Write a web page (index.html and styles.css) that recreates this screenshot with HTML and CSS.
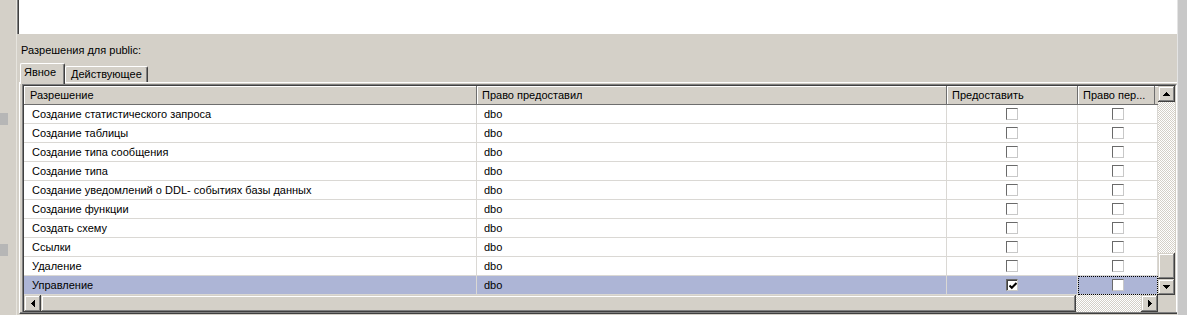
FILE: index.html
```html
<!DOCTYPE html>
<html lang="ru">
<head>
<meta charset="utf-8">
<title>Разрешения</title>
<link rel="stylesheet" href="styles.css">
</head>
<body>
<div class="window">
  <div class="side-left">
    <div class="mark mark-1"></div>
    <div class="mark mark-2"></div>
  </div>
  <div class="main">
    <div class="top-box"></div>
    <div class="panel">
      <div class="caption">Разрешения для public:</div>
      <div class="tabs">
        <div class="tab tab-active">Явное</div>
        <div class="tab tab-inactive">Действующее</div>
      </div>
      <div class="tab-body">
        <div class="grid">
          <div class="grid-inner">
            <div class="grid-main">
              <div class="view">
                <div class="header">
                  <div class="hcell hc1">Разрешение</div>
                  <div class="hcell">Право предоставил</div>
                  <div class="hcell">Предоставить</div>
                  <div class="hcell">Право пер...</div>
                  <div class="hfill"></div>
                </div>
                <div class="row"><div class="cell c1">Создание статистического запроса</div><div class="cell c2">dbo</div><div class="cell cc"><span class="cb"></span></div><div class="cell cc"><span class="cb"></span></div></div>
                <div class="row"><div class="cell c1">Создание таблицы</div><div class="cell c2">dbo</div><div class="cell cc"><span class="cb"></span></div><div class="cell cc"><span class="cb"></span></div></div>
                <div class="row"><div class="cell c1">Создание типа сообщения</div><div class="cell c2">dbo</div><div class="cell cc"><span class="cb"></span></div><div class="cell cc"><span class="cb"></span></div></div>
                <div class="row"><div class="cell c1">Создание типа</div><div class="cell c2">dbo</div><div class="cell cc"><span class="cb"></span></div><div class="cell cc"><span class="cb"></span></div></div>
                <div class="row"><div class="cell c1">Создание уведомлений о DDL- событиях базы данных</div><div class="cell c2">dbo</div><div class="cell cc"><span class="cb"></span></div><div class="cell cc"><span class="cb"></span></div></div>
                <div class="row"><div class="cell c1">Создание функции</div><div class="cell c2">dbo</div><div class="cell cc"><span class="cb"></span></div><div class="cell cc"><span class="cb"></span></div></div>
                <div class="row"><div class="cell c1">Создать схему</div><div class="cell c2">dbo</div><div class="cell cc"><span class="cb"></span></div><div class="cell cc"><span class="cb"></span></div></div>
                <div class="row"><div class="cell c1">Ссылки</div><div class="cell c2">dbo</div><div class="cell cc"><span class="cb"></span></div><div class="cell cc"><span class="cb"></span></div></div>
                <div class="row"><div class="cell c1">Удаление</div><div class="cell c2">dbo</div><div class="cell cc"><span class="cb"></span></div><div class="cell cc"><span class="cb"></span></div></div>
                <div class="row row-selected"><div class="cell c1">Управление</div><div class="cell c2">dbo</div><div class="cell cc"><span class="cb cb-checked"><svg width="8" height="8" viewBox="0 0 8 8"><path d="M0.5 3.5 L2.8 5.8 L7.5 1" fill="none" stroke="#000" stroke-width="2"/></svg></span></div><div class="cell cc focus"><span class="cb"></span></div></div>
              </div>
              <div class="vscroll">
                <div class="sbtn sbtn-v"><svg width="7" height="4" shape-rendering="crispEdges"><path d="M3 0h1v1h-1zM2 1h3v1h-3zM1 2h5v1h-5zM0 3h7v1h-7z"/></svg></div>
                <div class="track"></div>
                <div class="thumb thumb-v"></div>
                <div class="sbtn sbtn-v"><svg width="7" height="4" shape-rendering="crispEdges"><path d="M0 0h7v1h-7zM1 1h5v1h-5zM2 2h3v1h-3zM3 3h1v1h-1z"/></svg></div>
              </div>
            </div>
            <div class="hscroll">
              <div class="sbtn sbtn-h"><svg width="4" height="7" shape-rendering="crispEdges"><path d="M3 0h1v7h-1zM2 1h1v5h-1zM1 2h1v3h-1zM0 3h1v1h-1z"/></svg></div>
              <div class="thumb thumb-h"></div>
              <div class="track"></div>
              <div class="sbtn sbtn-h"><svg width="4" height="7" shape-rendering="crispEdges"><path d="M0 0h1v7h-1zM1 1h1v5h-1zM2 2h1v3h-1zM3 3h1v1h-1z"/></svg></div>
              <div class="corner"></div>
            </div>
          </div>
        </div>
      </div>
    </div>
  </div>
  <div class="side-right"></div>
</div>
</body>
</html>
```
FILE: styles.css
```css
* { box-sizing: border-box; }
html, body { margin: 0; padding: 0; }
body {
  width: 1187px;
  height: 315px;
  overflow: hidden;
  background: #d4d0c8;
  font-family: "Liberation Sans", Arial, sans-serif;
  font-size: 11px;
  color: #000;
}
.window { display: flex; height: 315px; }

.side-left {
  width: 17px;
  border-right: 1px solid #e6e4de;
  display: flex;
  flex-direction: column;
}
.mark { width: 8px; background: #b6b6b6; }
.mark-1 { height: 12px; margin-top: 113px; }
.mark-2 { height: 12px; margin-top: 119px; }

.main { width: 1160px; display: flex; flex-direction: column; }
.top-box {
  height: 34px;
  background: #fff;
  border-left: 1px solid #808080;
  box-shadow: inset 1px 0 #404040;
}
.panel {
  flex: 1;
  padding: 10px 0 1px 2px;
  display: flex;
  flex-direction: column;
}
.caption { height: 13px; line-height: 13px; margin: 0 0 6px 2px; }

.tabs {
  display: flex;
  align-items: flex-end;
  height: 19px;
  margin-left: 1px;
  position: relative;
  z-index: 1;
}
.tab {
  height: 16px;
  line-height: 14px;
  background: #d4d0c8;
  border-top: 1px solid #fff;
  border-left: 1px solid #fff;
  border-right: 1px solid #404040;
  box-shadow: inset -1px 0 #808080;
  border-radius: 2px 2px 0 0;
  white-space: nowrap;
}
.tab-active { width: 45px; height: 21px; margin-bottom: -2px; line-height: 17px; padding-left: 3px; }
.tab-inactive { width: 83px; padding-left: 5px; }

.tab-body {
  height: 232px;
  border-top: 1px solid #fff;
  border-left: 1px solid #fff;
  border-bottom: 1px solid #404040;
  box-shadow: inset 0 -1px #808080;
  padding: 1px 0 1px 2px;
}

.grid {
  width: 1155px;
  height: 228px;
  border-top: 1px solid #808080;
  border-left: 1px solid #808080;
  border-right: 1px solid #fff;
}
.grid-inner {
  height: 227px;
  border-top: 1px solid #404040;
  border-left: 1px solid #404040;
  border-right: 1px solid #d4d0c8;
  background: #fff;
  display: flex;
  flex-direction: column;
}
.grid-main { display: flex; height: 209px; }
.view { width: 1134px; }

.header {
  display: grid;
  grid-template-columns: 453px 470px 131px 77px 3px;
  height: 19px;
}
.hcell {
  background: #d4d0c8;
  border-right: 1px solid #6e6e6e;
  border-bottom: 1px solid #6e6e6e;
  box-shadow: inset 1px 1px #fff;
  line-height: 18px;
  padding-left: 5px;
  white-space: nowrap;
  overflow: hidden;
}
.hc1 { padding-left: 6px; }
.hfill { background: #d4d0c8; border-bottom: 1px solid #6e6e6e; box-shadow: inset 0 1px #fff; }

.row {
  display: grid;
  grid-template-columns: 453px 470px 131px 80px;
  height: 19px;
}
.cell {
  border-right: 1px solid #dad8d4;
  border-bottom: 1px solid #dad8d4;
  line-height: 18px;
  white-space: nowrap;
  overflow: hidden;
}
.c1 { padding-left: 8px; }
.c2 { padding-left: 7px; }
.cc { display: flex; align-items: center; justify-content: center; }
.row-selected .cell { background: #adb5d6; }
.focus { outline: 1px dotted #000; outline-offset: -1px; }

.cb {
  width: 12px;
  height: 12px;
  background: #fff;
  border-top: 1px solid #6a6a6a;
  border-left: 1px solid #6a6a6a;
  border-right: 1px solid #c8c8c8;
  border-bottom: 1px solid #c8c8c8;
  display: flex;
  align-items: center;
  justify-content: center;
}
.cb-checked { box-shadow: inset 1px 1px #404040; padding: 1px 0 0 1px; }

.vscroll { width: 17px; display: flex; flex-direction: column; }
.sbtn {
  background: #d4d0c8;
  box-shadow: inset -1px -1px #404040, inset 1px 1px #d4d0c8, inset -2px -2px #808080, inset 2px 2px #fff;
  display: flex;
  align-items: center;
  justify-content: center;
  flex: none;
}
.sbtn svg { display: block; fill: #000; }
.sbtn-v { height: 16px; }
.sbtn-h { width: 17px; }
.track {
  flex: 1;
  background-image: repeating-conic-gradient(#fff 0% 25%, #d4d0c8 0% 50%);
  background-size: 2px 2px;
}
.thumb {
  background: #d4d0c8;
  box-shadow: inset -1px -1px #404040, inset 1px 1px #d4d0c8, inset -2px -2px #808080, inset 2px 2px #fff;
  flex: none;
}
.thumb-v { height: 26px; }
.hscroll { display: flex; height: 17px; }
.thumb-h { width: 1035px; }
.corner { width: 17px; background: #d4d0c8; }

.side-right {
  flex: 1;
  background: #c8c8c8;
  border-left: 1px solid #e4e4e4;
}
```
